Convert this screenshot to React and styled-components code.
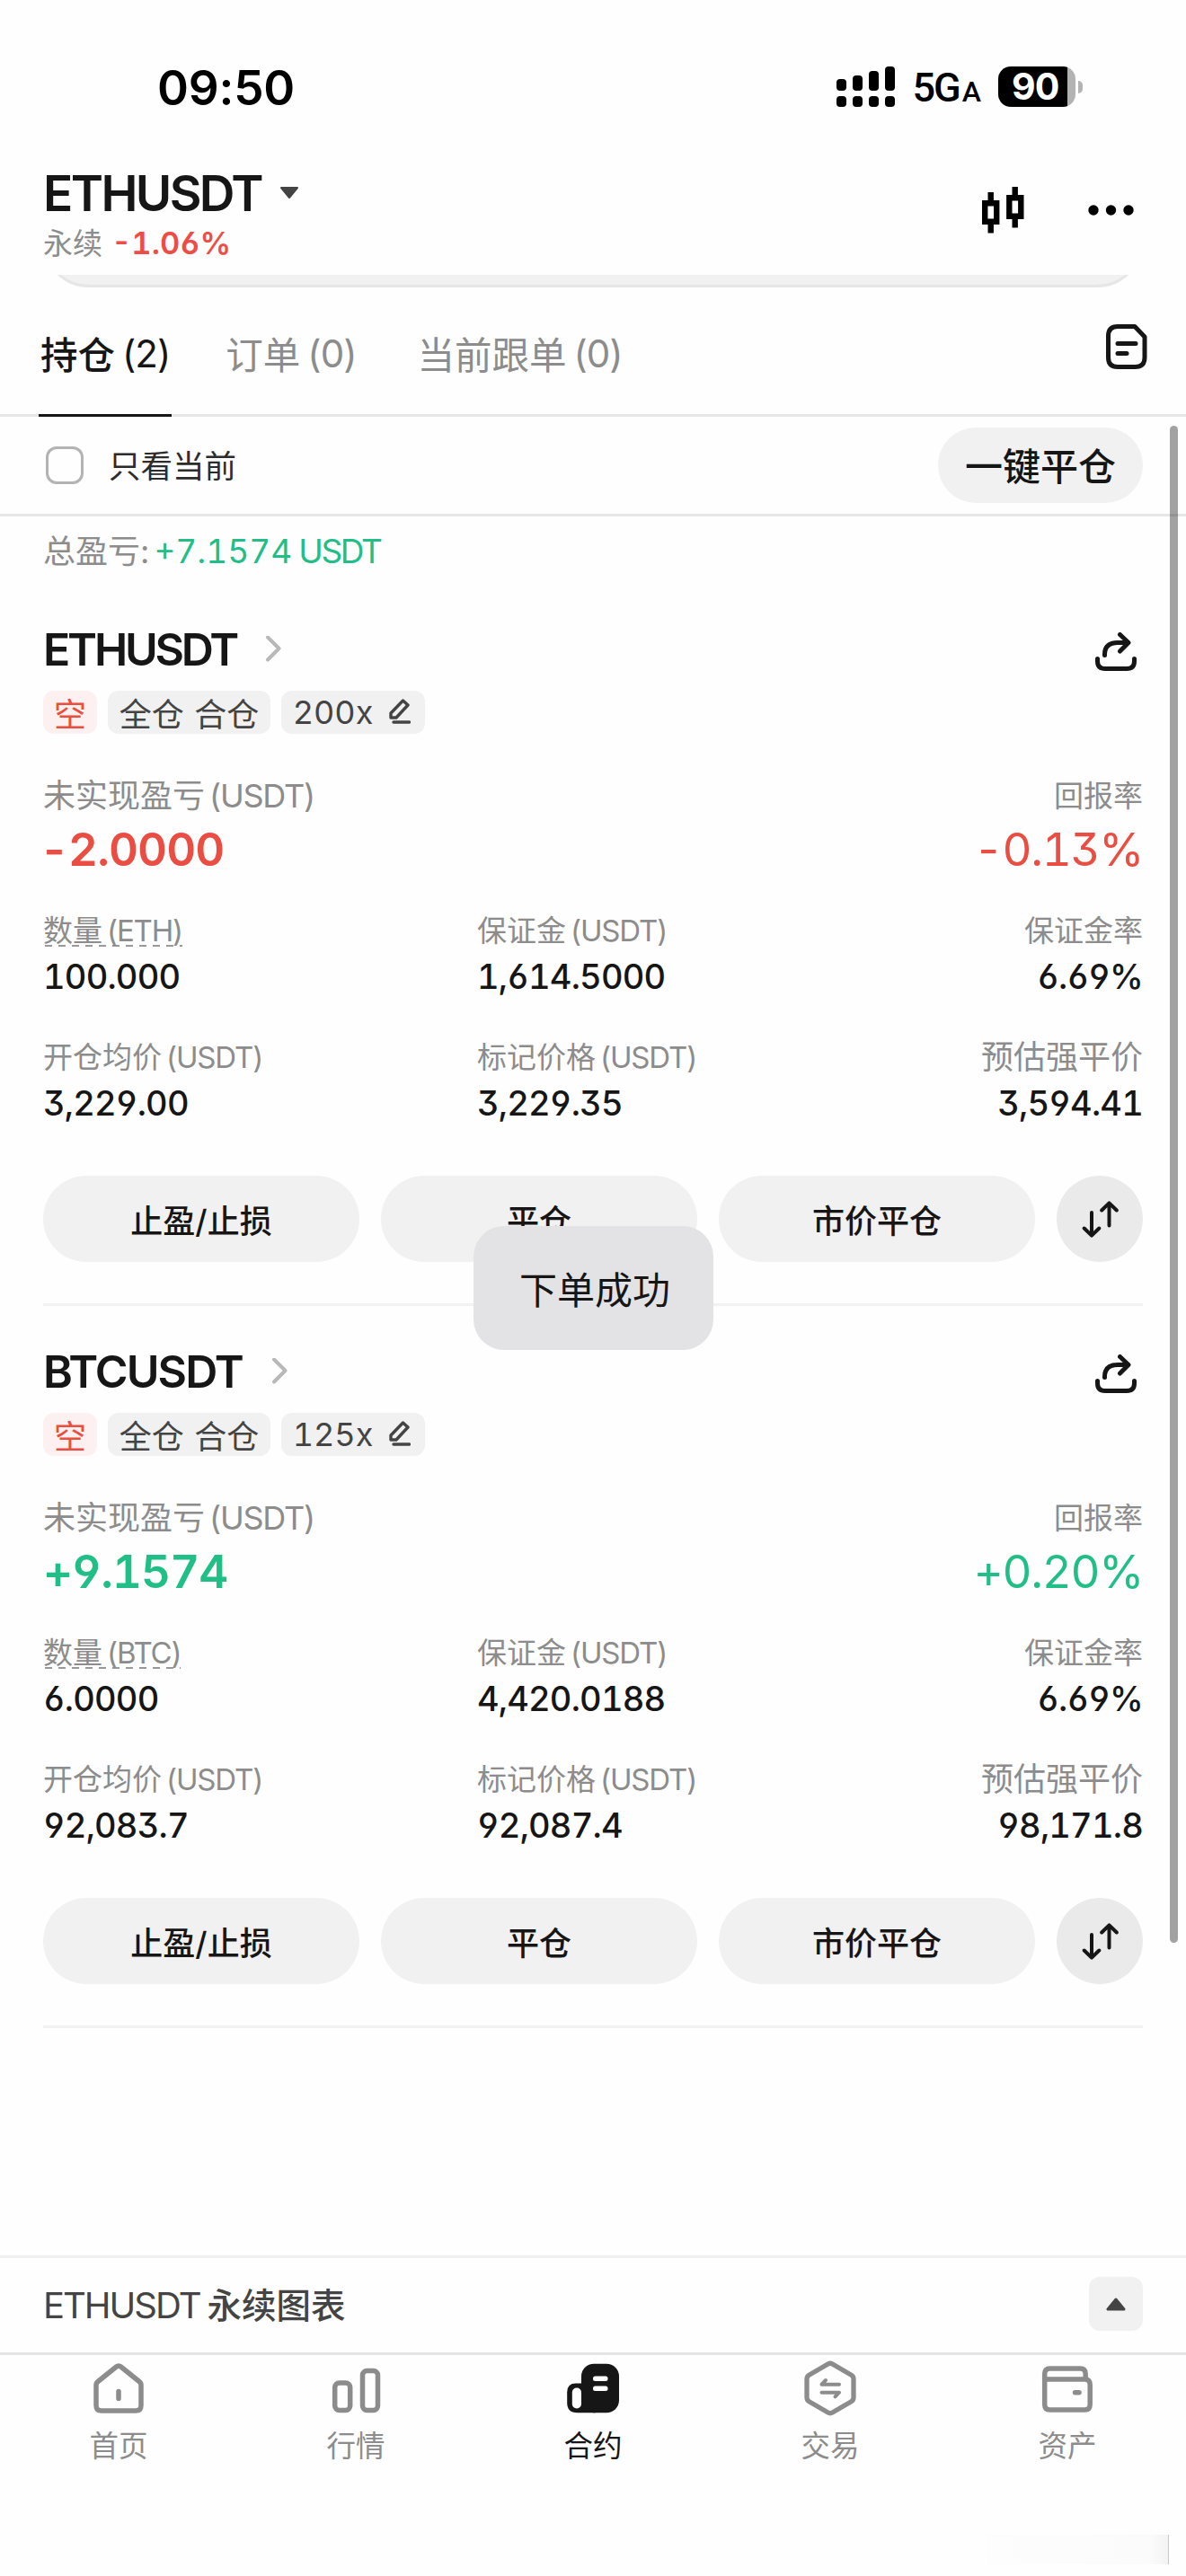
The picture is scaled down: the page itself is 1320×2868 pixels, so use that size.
import React from "react";
import styled, { createGlobalStyle } from "styled-components";

const GlobalStyle = createGlobalStyle`
  * {
    box-sizing: border-box;
  }
  body {
    margin: 0;
    background: #fefefe;
    color: #161616;
    font-family: Inter, "Noto Sans CJK SC", sans-serif;
  }
  svg {
    display: block;
    flex: none;
  }
`;

/* equal-width digits, with open 6 / 9 and a flat-top 3 */
const digits = `font-feature-settings: "tnum", "cv03", "cv04", "cv09";`;

const Screen = styled.div`
  position: relative;
  display: flex;
  flex-direction: column;
  width: 1320px;
  height: 2868px;
  overflow: hidden;
  white-space: nowrap;
`;

/* ---------- status bar ---------- */

const StatusBar = styled.div`
  display: flex;
  align-items: center;
  justify-content: space-between;
  height: 186px;
  padding: 10px 115px 0 175px;
  color: #000;
`;

const Clock = styled.span`
  font-size: 53px;
  font-weight: 600;
  letter-spacing: -0.2px;
`;

const StatusRight = styled.div`
  display: flex;
  align-items: center;
  margin-bottom: 3px;
`;

const Network = styled.span`
  margin: 7px 19px 0 20px;
  font-family: Roboto, sans-serif;
  font-size: 45px;
  font-weight: 500;
  letter-spacing: -2px;
  line-height: 46px;

  small {
    margin-left: 3px;
    font-size: 32px;
    letter-spacing: 0;
  }
`;

const Battery = styled.div`
  width: 86px;
  height: 45px;
  border-radius: 14px;
  background: linear-gradient(90deg, #000 77px, #b3b3b3 77px);
  color: #fff;
  font-size: 41px;
  font-weight: 700;
  line-height: 45px;
  padding-left: 15px;
  letter-spacing: -0.8px;
`;

const BatteryNub = styled.div`
  width: 5px;
  height: 14px;
  margin-left: 3px;
  border-radius: 0 5px 5px 0;
  background: #b3b3b3;
`;

/* ---------- header ---------- */

const Header = styled.header`
  display: flex;
  justify-content: space-between;
  height: 120px;
  padding: 0 58px 0 48px;
`;

const HeaderTitle = styled.div`
  display: flex;
  align-items: center;
  gap: 20px;
  height: 58px;
  font-size: 55px;
  font-weight: 600;
  letter-spacing: -2.6px;
`;

const HeaderSub = styled.div`
  display: flex;
  height: 54px;
  gap: 10px;
  font-size: 33px;
  line-height: 54px;
  color: #8c8c8c;
`;

const Change = styled.span`
  font-size: 34.5px;
  font-weight: 600;
  ${digits}
  letter-spacing: 0;
  color: #ee4d45;
`;

const HeaderIcons = styled.div`
  display: flex;
  align-items: center;
  gap: 71px;
  height: 96px;
`;

/* bottom edge of the card that is scrolled under the header */
const CardEdge = styled.div`
  display: flex;
  align-items: flex-end;
  height: 14px;
  margin: 0 48px;
  overflow: hidden;

  &::after {
    content: "";
    flex: 1;
    height: 110px;
    flex-shrink: 0;
    border: 3px solid #e6e6e6;
    border-radius: 51px;
    background: #f1f1f1;
  }
`;

/* ---------- tabs ---------- */

const Tabs = styled.nav`
  display: flex;
  height: 144px;
  padding: 0 43px;
  box-shadow: inset 0 -3px #e6e6e6;
`;

const Tab = styled.div`
  display: flex;
  align-items: center;
  height: 144px;
  padding: 5px 2px 0;
  margin-right: ${p => (p.$active ? 58 : 64)}px;
  border-bottom: 3px solid ${p => (p.$active ? "#161616" : "transparent")};
  color: ${p => (p.$active ? "#161616" : "#8c8c8c")};
  font-size: 41.5px;
  font-weight: ${p => (p.$active ? 500 : 400)};
`;

const Count = styled.span`
  margin-left: 8px;
  font-size: 42px;
  font-weight: 400;
  letter-spacing: -1px;
`;

const TabsIcon = styled.div`
  margin: 41px 0 0 auto;
`;

/* ---------- filter ---------- */

const FilterBar = styled.div`
  display: flex;
  align-items: center;
  height: 111px;
  padding: 0 48px;
  border-bottom: 3px solid #e6e6e6;
`;

const Checkbox = styled.span`
  width: 42px;
  height: 42px;
  margin: 0 28px 0 3px;
  border: 3px solid #b3b3b3;
  border-radius: 12px;
`;

const FilterLabel = styled.span`
  flex: 1;
  margin-top: -3px;
  font-size: 35.5px;
  color: #2c2c2c;
`;

const CloseAll = styled.button`
  width: 228px;
  height: 84px;
  padding: 0;
  border: 0;
  border-radius: 42px;
  background: #f1f1f1;
  color: #161616;
  font: 500 42px/88px Inter, "Noto Sans CJK SC", sans-serif;
`;

const Summary = styled.div`
  display: flex;
  height: 75px;
  padding: 3px 48px 0;
  font-size: 36px;
  line-height: 72px;
  color: #8c8c8c;
`;

const SummaryValue = styled.span`
  margin-left: ${p => p.$gap}px;
  font-size: 37px;
  ${digits}
  color: #22be87;
  letter-spacing: ${p => p.$spacing || 0};
`;

/* ---------- positions ---------- */

const Position = styled.section`
  height: 804px;
  margin: 0 48px;
  border-bottom: 3px solid #f2f2f2;
`;

const PositionHead = styled.div`
  display: flex;
  align-items: center;
  height: 119px;
  padding: 27px 7px 0 0;
`;

const Pair = styled.span`
  margin-right: 33px;
  font-size: 50px;
  font-weight: 600;
  letter-spacing: ${p => p.$tracking}px;
`;

const ShareSlot = styled.div`
  margin: 5px 0 0 auto;
`;

const TagRow = styled.div`
  display: flex;
  gap: 12px;
  height: 48px;
`;

const Tag = styled.span`
  display: flex;
  align-items: center;
  justify-content: center;
  width: ${p => p.$width};
  border-radius: 12px;
  background: ${p => (p.$short ? "#fdf0f0" : "#f1f1f1")};
  color: ${p => (p.$short ? "#ea4d41" : "#444")};
  font-size: 36px;
  ${digits}
  word-spacing: 2px;

  svg {
    margin: -2px 3px 0 18px;
  }
`;

const MetricGrid = styled.div`
  display: grid;
  grid-template-columns: 483px 1fr auto;
  margin-top: ${p => p.$top}px;
`;

const Metric = styled.div`
  display: flex;
  flex-direction: column;
  align-items: ${p => (p.$end ? "flex-end" : "flex-start")};
`;

const Label = styled.div`
  font-size: ${p => (p.$large ? 36 : 33)}px;
  line-height: ${p => p.$line || 50}px;
  color: #8c8c8c;
  ${p =>
    p.$dashed &&
    `background: repeating-linear-gradient(90deg, #999 0 8px, transparent 8px 15px)
      2px 41px / 100% 2px no-repeat;`}
`;

const Unit = styled.span`
  margin-left: 5px;
  letter-spacing: -0.035em;
`;

const Value = styled.div`
  font-size: 38px;
  line-height: 53px;
  font-weight: 450;
  letter-spacing: -0.8px;
  ${digits}
`;

const BigValue = styled.div`
  margin-left: ${p => (p.$bold && !p.$up ? -4 : 0)}px;
  font-size: 51px;
  line-height: 65px;
  font-weight: ${p => (p.$bold ? 600 : 400)};
  letter-spacing: ${p => (p.$bold ? -0.9 : -1.3)}px;
  ${digits}
  color: ${p => (p.$up ? "#22be87" : "#ea4d41")};
`;

const Actions = styled.div`
  display: grid;
  grid-template-columns: repeat(3, 352px) 96px;
  justify-content: space-between;
  margin-top: 54px;
`;

const Action = styled.button`
  display: flex;
  align-items: center;
  justify-content: center;
  height: 96px;
  padding: 0;
  border: 0;
  border-radius: 48px;
  background: ${p => (p.$round ? "#eaeaea" : "#f1f1f1")};
  color: #161616;
  font: 500 36px Inter, "Noto Sans CJK SC", sans-serif;
`;

/* ---------- bottom ---------- */

const ChartBar = styled.div`
  display: flex;
  align-items: center;
  justify-content: space-between;
  height: 108px;
  margin-top: auto;
  padding: 0 48px 3px;
  border-top: 3px solid #f0f0f0;
`;

const ChartName = styled.div`
  margin-bottom: 3px;
  font-size: 38.5px;
  font-weight: 500;
  color: #444;

  span {
    margin-right: 8px;
    font-size: 40px;
    font-weight: 400;
    letter-spacing: -2px;
  }
`;

const Expand = styled.div`
  display: flex;
  align-items: center;
  justify-content: center;
  width: 60px;
  height: 60px;
  border-radius: 12px;
  background: #f1f1f1;
`;

const TabBar = styled.nav`
  display: grid;
  grid-template-columns: repeat(5, 1fr);
  height: 203px;
  border-top: 3px solid #e5e5e5;
`;

const TabItem = styled.div`
  display: flex;
  flex-direction: column;
  align-items: center;
  padding-top: 6px;
  color: ${p => (p.$active ? "#161616" : "#8c8c8c")};
  font-size: 32.5px;
  line-height: 50px;

  svg {
    margin-bottom: 9px;
  }
`;

const Smudge = styled.div`
  width: 203px;
  height: 33px;
  margin: 0 19px 13px auto;
  border-right: 1px solid #c9c9c9;
  background: linear-gradient(90deg, #fdfdfd, #fbfbfb 90%, #f3f3f3);
`;

const Scrollbar = styled.div`
  position: absolute;
  top: 474px;
  right: 9px;
  width: 9px;
  height: 1689px;
  border-radius: 5px;
  background: rgba(0, 0, 0, 0.36);
`;

const Toast = styled.div`
  position: absolute;
  top: 1365px;
  left: 527px;
  width: 267px;
  height: 138px;
  padding-left: 3px;
  border-radius: 34px;
  background: #e3e3e5;
  font-size: 42px;
  line-height: 143px;
  text-align: center;
`;

/* ---------- icons ---------- */

const stroke = {
  fill: "none",
  stroke: "currentColor",
  strokeLinecap: "round",
  strokeLinejoin: "round"
};

const Signal = () => (
  <svg width="65" height="45" viewBox="0 0 65 45">
    {[14, 10, 5, 0].map((top, i) => (
      <g key={top}>
        <rect x={i * 18} y={top} width="11" height={27 - top} rx="4" />
        <rect x={i * 18} y="33" width="11" height="12" rx="4" />
      </g>
    ))}
  </svg>
);

const Caret = () => (
  <svg width="22" height="14" viewBox="0 0 22 14">
    <path d="M2 1h18L11 12z" fill="#444" stroke="#444" strokeWidth="2" strokeLinejoin="round" />
  </svg>
);

const CandleIcon = () => (
  <svg width="47" height="52" viewBox="0 0 47 52" fill="none" stroke="#000" strokeWidth="6.4">
    <path d="M9.7 6v10M9.7 41v10.500M3.200 18.200h13v20.600h-13z" />
    <path d="M36.700 0v10M36.700 35v10.500M30.300 12.200h13v20.600h-13z" />
  </svg>
);

const DotsIcon = () => (
  <svg width="51" height="12" viewBox="0 0 51 12">
    <circle cx="6" cy="6" r="5.700" />
    <circle cx="25.500" cy="6" r="5.700" />
    <circle cx="45" cy="6" r="5.700" />
  </svg>
);

const DocIcon = () => (
  <svg width="46" height="50" viewBox="0 0 46 50" {...stroke} strokeWidth="5">
    <path d="M13 2.500h19L43 14v23q0 10.500-10.500 10.500h-19.500Q2.500 47.500 2.500 37V13Q2.500 2.500 13 2.500z" />
    <path d="M13 21.500h20M13 32.500h10" />
  </svg>
);

const ChevronIcon = () => (
  <svg width="17" height="30" viewBox="0 0 17 30" {...stroke} stroke="#b8b8b8" strokeWidth="4">
    <path d="M2 1.500l12.500 12.500L2 26.500" />
  </svg>
);

const ShareIcon = () => (
  <svg width="46" height="43" viewBox="0 0 46 43" {...stroke} strokeWidth="5">
    <path d="M10.500 25.500v-1Q10.500 11.500 25 11.500h11.500M27.500 2.500l9.500 9-9.500 9.500" />
    <path d="M2.500 29.500v2.500q0 8.500 8.500 8.500h24q8.500 0 8.500-8.500v-2.500" />
  </svg>
);

const PencilIcon = () => (
  <svg width="24" height="28" viewBox="0 0 24 28" {...stroke} strokeWidth="3.4">
    <path d="M2 16L15.500 2l5.500 5L8 21H2zM5 26h17.500" />
  </svg>
);

const SwapIcon = () => (
  <svg width="41" height="41" viewBox="0 0 41 41" {...stroke} strokeWidth="4">
    <path d="M11 13v25.500M2.700 30.500l8.300 8.200 8.300-8.200" />
    <path d="M30.500 27.500V2.500M22.200 10.500l8.300-8.200 8.300 8.200" />
  </svg>
);

const UpIcon = () => (
  <svg width="22" height="16" viewBox="0 0 22 16">
    <path d="M2 14h18L11 3z" fill="#444" stroke="#444" strokeWidth="3" strokeLinejoin="round" />
  </svg>
);

const HomeIcon = () => (
  <svg width="62" height="62" viewBox="0 0 62 62" {...stroke} strokeWidth="5.5">
    <path d="M28.500 7q2.500-2 5 0L54 23.500q2 1.500 2 4V50q0 6-6 6H12q-6 0-6-6V27.500q0-2.500 2-4zM31 34.500v8" />
  </svg>
);

const MarketIcon = () => (
  <svg width="62" height="62" viewBox="0 0 62 62" {...stroke} strokeWidth="5.5">
    <rect x="7.700" y="25" width="17" height="30.500" rx="5" />
    <rect x="38.500" y="11.500" width="17" height="44" rx="5" />
  </svg>
);

const ContractIcon = () => (
  <svg width="62" height="62" viewBox="0 0 62 62">
    <rect x="18" y="3.700" width="42" height="54.600" rx="14" fill="#161616" />
    <path d="M24 25.500H12q-9.800 0-9.800 9.800V47q0 11.300 11.300 11.300H34V40z" fill="#161616" />
    <rect x="7.800" y="30.500" width="10.200" height="23" rx="5" fill="#fefefe" />
    <rect x="31" y="17.500" width="16.500" height="5.500" rx="2.500" fill="#fefefe" />
    <rect x="31" y="28.500" width="16.500" height="5.500" rx="2.500" fill="#fefefe" />
  </svg>
);

const TradeIcon = () => (
  <svg width="62" height="62" viewBox="0 0 62 62" {...stroke} strokeWidth="5.3">
    <path d="M28.500 4q2.500-1.500 5 0l21 12.300q2.500 1.500 2.500 4.500v20.400q0 3-2.500 4.500L33.500 58q-2.500 1.500-5 0l-21-12.300Q5 44.200 5 41.200V20.800q0-3 2.500-4.500z" />
    <path d="M26 22l-4.500 4.700h19.500M21.500 35.700h19.500L36.500 40.400" strokeWidth="4" />
  </svg>
);

const WalletIcon = () => (
  <svg width="62" height="62" viewBox="0 0 62 62" {...stroke} strokeWidth="5.500">
    <path d="M5.700 20.500V15q0-6 6-6h33.500q6 0 6 6v5.500" />
    <path d="M5.700 21h44.500q6 0 6 6v22q0 6-6 6H11.700q-6 0-6-6zM39.500 35.800h4.500" />
  </svg>
);

/* ---------- data ---------- */

const tabs = [["持仓", 2], ["订单", 0], ["当前跟单", 0]];

const positions = [
  {
    pair: "ETHUSDT",
    tracking: -3.2,
    coin: "ETH",
    leverage: "200x",
    pnl: "-2.0000",
    roi: "-0.13%",
    size: "100.000",
    margin: "1,614.5000",
    rate: "6.69%",
    entry: "3,229.00",
    mark: "3,229.35",
    liq: "3,594.41"
  },
  {
    pair: "BTCUSDT",
    tracking: -1.9,
    coin: "BTC",
    leverage: "125x",
    pnl: "+9.1574",
    roi: "+0.20%",
    size: "6.0000",
    margin: "4,420.0188",
    rate: "6.69%",
    entry: "92,083.7",
    mark: "92,087.4",
    liq: "98,171.8"
  }
];

const navItems = [
  ["首页", HomeIcon],
  ["行情", MarketIcon],
  ["合约", ContractIcon],
  ["交易", TradeIcon],
  ["资产", WalletIcon]
];

function Field({ label, unit, value, end, dashed, large }) {
  return (
    <Metric $end={end}>
      <Label $dashed={dashed} $large={large}>
        {label}
        {unit && <Unit>({unit})</Unit>}
      </Label>
      <Value>{value}</Value>
    </Metric>
  );
}

function PositionItem({ data }) {
  const up = data.pnl.startsWith("+");
  return (
    <Position>
      <PositionHead>
        <Pair $tracking={data.tracking}>{data.pair}</Pair>
        <ChevronIcon />
        <ShareSlot>
          <ShareIcon />
        </ShareSlot>
      </PositionHead>
      <TagRow>
        <Tag $short $width="60px">空</Tag>
        <Tag $width="181px">全仓 合仓</Tag>
        <Tag $width="160px">
          {data.leverage}
          <PencilIcon />
        </Tag>
      </TagRow>
      <MetricGrid $top={43}>
        <Metric>
          <Label $large $line={53}>
            未实现盈亏<Unit>(USDT)</Unit>
          </Label>
          <BigValue $bold $up={up}>{data.pnl}</BigValue>
        </Metric>
        <div />
        <Metric $end>
          <Label $line={53}>回报率</Label>
          <BigValue $up={up}>{data.roi}</BigValue>
        </Metric>
      </MetricGrid>
      <MetricGrid $top={33}>
        <Field label="数量" unit={data.coin} value={data.size} dashed />
        <Field label="保证金" unit="USDT" value={data.margin} />
        <Field label="保证金率" value={data.rate} end />
      </MetricGrid>
      <MetricGrid $top={38}>
        <Field label="开仓均价" unit="USDT" value={data.entry} />
        <Field label="标记价格" unit="USDT" value={data.mark} />
        <Field label="预估强平价" value={data.liq} end large />
      </MetricGrid>
      <Actions>
        <Action>止盈/止损</Action>
        <Action>平仓</Action>
        <Action>市价平仓</Action>
        <Action $round>
          <SwapIcon />
        </Action>
      </Actions>
    </Position>
  );
}

function App() {
  return (
    <Screen>
      <GlobalStyle />
      <StatusBar>
        <Clock>09:50</Clock>
        <StatusRight>
          <Signal />
          <Network>
            5G<small>A</small>
          </Network>
          <Battery>90</Battery>
          <BatteryNub />
        </StatusRight>
      </StatusBar>
      <Header>
        <div>
          <HeaderTitle>
            ETHUSDT
            <Caret />
          </HeaderTitle>
          <HeaderSub>
            永续
            <Change>-1.06%</Change>
          </HeaderSub>
        </div>
        <HeaderIcons>
          <CandleIcon />
          <DotsIcon />
        </HeaderIcons>
      </Header>
      <CardEdge />
      <Tabs>
        {tabs.map(([name, count], i) => (
          <Tab key={name} $active={i === 0}>
            {name}
            <Count>({count})</Count>
          </Tab>
        ))}
        <TabsIcon>
          <DocIcon />
        </TabsIcon>
      </Tabs>
      <FilterBar>
        <Checkbox />
        <FilterLabel>只看当前</FilterLabel>
        <CloseAll>一键平仓</CloseAll>
      </FilterBar>
      <Summary>
        总盈亏:
        <SummaryValue $gap={5}>+7.1574</SummaryValue>
        <SummaryValue $gap={7} $spacing="-2.4px">USDT</SummaryValue>
      </Summary>
      {positions.map(p => (
        <PositionItem key={p.pair} data={p} />
      ))}
      <ChartBar>
        <ChartName>
          <span>ETHUSDT</span>
          永续图表
        </ChartName>
        <Expand>
          <UpIcon />
        </Expand>
      </ChartBar>
      <TabBar>
        {navItems.map(([name, Icon]) => (
          <TabItem key={name} $active={name === "合约"}>
            <Icon />
            {name}
          </TabItem>
        ))}
      </TabBar>
      <Smudge />
      <Scrollbar />
      <Toast>下单成功</Toast>
    </Screen>
  );
}

export default App;
